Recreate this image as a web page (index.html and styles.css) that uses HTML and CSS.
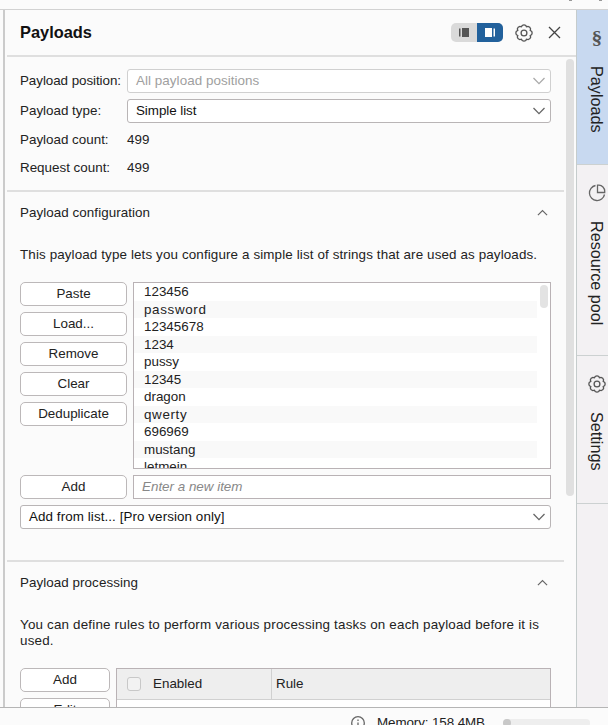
FILE: index.html
```html
<!DOCTYPE html>
<html lang="en">
<head>
<meta charset="utf-8">
<title>Payloads</title>
<link rel="stylesheet" href="styles.css">
</head>
<body>
<svg class="defs" aria-hidden="true">
  <symbol id="gear" viewBox="0 0 18 18"><path d="M7.2 1.500Q9 .3 10.800 1.500L11.400 2.800 13 2.300Q15.200 2.700 15.600 4.800L15.200 6.500 16.500 7.200Q17.700 9 16.500 10.800L15.200 11.500 15.700 13.200Q15.200 15.300 13.100 15.700L11.400 15.200 10.800 16.500Q9 17.700 7.200 16.500L6.500 15.200 4.800 15.700Q2.700 15.200 2.300 13.100L2.800 11.500 1.500 10.800Q.3 9 1.500 7.200L2.800 6.500 2.300 4.800Q2.800 2.700 4.900 2.300L6.500 2.800z"/><circle cx="9" cy="9" r="2.900"/></symbol>
  <symbol id="down" viewBox="0 0 12 8"><path d="M.5 1 6 6.600 11.500 1"/></symbol>
  <symbol id="up" viewBox="0 0 12 8"><path d="M1 6.400 6 1.400 11 6.400"/></symbol>
</svg>
<div class="app">
  <div class="topbar"><i></i><i></i></div>
  <div class="main">
    <div class="gutter"></div>
    <section class="panel">
      <header class="head">
        <h1>Payloads</h1>
        <div class="toggle">
          <span class="seg"><svg width="10" height="9"><path d="M0 .5h1.500v8H0zM3 0h7v9H3z"/></svg></span>
          <span class="seg on"><svg width="10" height="9"><path d="M0 0h7v9H0zM8.500 .5H10v8H8.500z"/></svg></span>
        </div>
        <svg class="icon gear"><use href="#gear"/></svg>
        <svg class="icon close" viewBox="0 0 13 13"><path d="M1 1l11 11M12 1L1 12"/></svg>
      </header>
      <div class="body">
        <div class="content">
          <div class="fields">
            <label class="tight">Payload position:</label><div class="select disabled"><span>All payload positions</span><svg class="chev"><use href="#down"/></svg></div>
            <label>Payload type:</label><div class="select"><span class="tight">Simple list</span><svg class="chev"><use href="#down"/></svg></div>
            <label>Payload count:</label><span>499</span>
            <label>Request count:</label><span>499</span>
          </div>
          <section class="config">
            <div class="title"><span>Payload configuration</span><svg class="chev"><use href="#up"/></svg></div>
            <p class="desc one">This payload type lets you configure a simple list of strings that are used as payloads.</p>
            <div class="editor">
              <div class="buttons">
                <button>Paste</button><button>Load...</button><button>Remove</button><button>Clear</button><button>Deduplicate</button>
              </div>
              <div class="list">
                <ul><li>123456</li><li class="loose">password</li><li>12345678</li><li>1234</li><li>pussy</li><li>12345</li><li>dragon</li><li class="loose">qwerty</li><li>696969</li><li>mustang</li><li>letmein</li></ul>
                <div class="thumb"></div>
              </div>
              <button>Add</button>
              <div class="input">Enter a new item</div>
              <div class="select wide"><span>Add from list... [Pro version only]</span><svg class="chev"><use href="#down"/></svg></div>
            </div>
          </section>
          <section class="processing">
            <div class="title"><span>Payload processing</span><svg class="chev"><use href="#up"/></svg></div>
            <p class="desc two">You can define rules to perform various processing tasks on each payload before it is<br>used.</p>
            <div class="rules">
              <div class="buttons"><button>Add</button><button>Edit</button></div>
              <div class="table"><div class="thead"><span class="cell"><i class="check"></i>Enabled</span><span class="cell rule">Rule</span></div></div>
            </div>
          </section>
        </div>
        <div class="scroll"><div class="bar"></div></div>
      </div>
    </section>
    <nav class="tabs">
      <div class="tab active"><span class="section">§</span><span class="name">Payloads</span></div>
      <div class="tab pool"><svg class="icon pie" viewBox="0 0 18 18"><path d="M7.500 1.500A7.600 7.600 0 1 0 16.500 10.500M9.500 1.200v7.300h7.200v-1.500a6 6 0 0 0-5.700-5.800z"/></svg><span class="name">Resource pool</span></div>
      <div class="tab settings"><svg class="icon gear"><use href="#gear"/></svg><span class="name">Settings</span></div>
    </nav>
  </div>
  <footer class="status">
    <svg class="icon info" viewBox="0 0 14 14"><circle cx="7" cy="7" r="6.300"/><path d="M7 3.500v1.500M7 6.500v4"/></svg>
    <span class="memory">Memory: 158.4MB</span>
    <div class="meter"><div class="fill"></div></div>
  </footer>
</div>
</body>
</html>
```
FILE: styles.css
```css
* { box-sizing: border-box; }
body { margin: 0; background: #fbfbfb; color: #222; font: 13.4px/16px "Liberation Sans", Arial, sans-serif; overflow: hidden; }
.defs { position: absolute; width: 0; height: 0; }
.app { display: flex; flex-direction: column; width: 608px; height: 725px; overflow: hidden; }
.topbar { display: flex; gap: 27px; padding-left: 569px; height: 10px; flex: none; border-bottom: 1px solid #d2d2d2; }
.topbar i { width: 3px; height: 1px; background: #999; }
.main { display: flex; height: 697px; flex: none; overflow: hidden; }
.gutter { width: 5px; border-right: 2px solid #cbcbcb; flex: none; }
.panel { width: 571px; flex: none; }
.head { display: flex; align-items: center; height: 47px; margin-left: 2px; padding: 0 0 1px 13px; border-bottom: 2px solid #dfdfdf; }
h1 { margin: 0; width: 431px; font-size: 16.400px; line-height: 20px; color: #111; }
svg { display: block; fill: none; stroke: #666; stroke-width: 1.300; }
.toggle { display: flex; width: 52px; height: 19px; margin-top: 1px; border-radius: 5px; overflow: hidden; background: #dadada; }
.seg { display: flex; flex: 1; align-items: center; justify-content: center; }
.seg svg { fill: #555; stroke: none; }
.seg.on { background: #22619c; }
.seg.on svg { fill: #fff; }
.icon.gear { width: 18px; height: 18px; stroke: #555; }
.head .gear { margin: 1px 0 0 12px; }
.close { width: 13px; height: 13px; margin: 1px 0 0 15px; stroke: #444; }
.body { display: flex; height: 650px; overflow: hidden; }
.content { width: 557px; margin-left: 2px; }
.fields { display: grid; grid-template-columns: 107px 424px; grid-template-rows: 24px 24px 22px 22px; row-gap: 6px; align-items: center; padding: 12px 0 0 13px; height: 135px; border-bottom: 2px solid #dfdfdf; }
.fields label, .title, .desc { white-space: nowrap; }
.tight { letter-spacing: -.06px; }
.select.disabled span { letter-spacing: .06px; }
.select { display: flex; align-items: center; justify-content: space-between; height: 24px; padding: 0 5px 0 8px; background: #fff; border: 1px solid #b9b5b6; border-radius: 3px; color: #111; }
.select.disabled { color: #a0a0a0; border-color: #d0d0d0; }
.disabled .chev { stroke: #aaa; }
.chev { width: 12px; height: 8px; }
.config { height: 370px; padding-left: 13px; border-bottom: 2px solid #dfdfdf; }
.title { display: flex; justify-content: space-between; align-items: center; width: 531px; height: 42px; padding-right: 3px; letter-spacing: .06px; }
.title .chev { width: 11px; }
.desc { margin: 0; }
.desc.one { padding-top: 13px; height: 48px; letter-spacing: .125px; }
.editor { display: grid; grid-template-columns: 107px 418px; grid-template-rows: 187px 24px 24px; gap: 6px; }
.buttons { display: flex; flex-direction: column; gap: 6px; }
button { display: block; width: 100%; height: 24px; flex: none; padding: 0 0 1px; border: 1px solid #bcb8b9; border-radius: 5px; background: #fff; color: #222; font: inherit; }
.list { display: flex; overflow: hidden; border: 1px solid #b9b2b5; background: #fff; }
ul { list-style: none; margin: 0; padding: 0; width: 403px; }
li { height: 17.500px; line-height: 18px; padding-left: 10px; }
li:nth-child(even) { background: #f9f9f9; }
.loose { letter-spacing: .65px; }
.thumb { width: 8px; height: 23px; margin: 2px 0 0 3px; border-radius: 4px; background: #e3e3e3; }
.input { border: 1px solid #b9b2b5; background: #fff; padding-left: 8px; line-height: 22px; color: #888; font-style: italic; }
.wide { grid-column: 1 / 3; letter-spacing: .08px; }
.processing { padding-left: 13px; }
.desc.two { padding-top: 13px; height: 64px; letter-spacing: .185px; }
.rules { display: flex; gap: 6px; }
.rules .buttons { width: 90px; }
.table { width: 435px; height: 60px; border: 1px solid #b9b2b5; background: #fff; }
.thead { display: flex; height: 31px; background: #eee; border-bottom: 1px solid #d0d0d0; }
.cell { display: flex; align-items: center; width: 155px; padding-left: 10px; border-right: 1px solid #d0d0d0; }
.cell.rule { border: 0; padding-left: 4px; }
.check { width: 14px; height: 14px; margin-right: 12px; border: 1px solid #c8c8c8; border-radius: 3px; background: #f2f2f2; }
.scroll { width: 8px; margin-left: 2px; padding-top: 2px; }
.bar { width: 8px; height: 437px; border-radius: 4px; background: #e0e0e0; }
.tabs { flex: none; width: 32px; border-left: 1px solid #c5cccc; background: #f3f1f3; }
.tab { display: flex; flex-direction: column; align-items: flex-end; height: 155px; padding: 19px 2px 0 0; border-bottom: 1px solid #ccd1d1; }
.tab.pool { height: 191px; }
.tab.settings { height: 148px; }
.tab.active { background: #c8d9f0; }
.name { writing-mode: vertical-rl; font-size: 16.200px; line-height: 18px; color: #222; margin-top: 19px; }
.section { width: 18px; height: 18px; text-align: center; font: bold 18px/18px "Liberation Serif", serif; color: #555; transform: scaleX(1.2); }
.tab .icon { width: 18px; height: 18px; }
.status { display: flex; flex: none; height: 18px; border-top: 1px solid #b5b5b5; padding: 7px 0 0 351px; }
.info { flex: none; width: 14px; height: 14px; margin-top: 1px; }
.memory { flex: none; width: 138px; padding-left: 12px; letter-spacing: -.1px; white-space: nowrap; }
.meter { flex: none; width: 87px; height: 8px; margin-top: 4px; border-radius: 4px; background: #eee; }
.fill { width: 8px; height: 8px; border-radius: 4px; background: #c8c8c8; }
```
